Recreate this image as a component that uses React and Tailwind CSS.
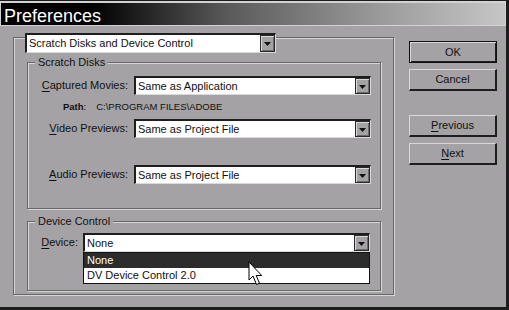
import React from "react";

const Arrow = () => (
  <svg width="7" height="4" viewBox="0 0 7 4" className="mt-[1px]">
    <polygon points="0,0 7,0 3.5,4" fill="#111" />
  </svg>
);

const Dropdown = ({ value, className = "" }) => (
  <div
    className={`flex border-t-2 border-l-2 border-t-[#1e1e1e] border-l-[#1e1e1e] border-b border-r border-b-[#dadada] border-r-[#dadada] bg-white ${className}`}
  >
    <div className="flex-1 truncate pl-[2px] text-[11px] leading-[16px] text-[#111]">
      {value}
    </div>
    <div className="flex w-[15px] items-center justify-center border border-[#2a2a2a] bg-[#a4a2a4] shadow-[inset_1px_1px_0_#d8d8d8,inset_-1px_-1px_0_#6a6a6a]">
      <Arrow />
    </div>
  </div>
);

const Group = ({ title, className = "", children }) => (
  <div
    className={`flex flex-col border border-[#686868] shadow-[inset_1px_1px_0_#d6d6d6,1px_1px_0_#d6d6d6] ${className}`}
  >
    <div className="-mt-[8px] ml-[7px] self-start bg-[#a4a2a4] px-[3px] text-[11px] leading-[14px] text-[#111]">
      {title}
    </div>
    {children}
  </div>
);

const Button = ({ children, primary, className = "" }) => (
  <div
    className={
      primary
        ? `flex h-[22px] w-[88px] items-center justify-center border border-[#111] text-[11px] text-[#111] shadow-[inset_1px_1px_0_#d8d8d8,inset_-1px_-1px_0_#1e1e1e] ${className}`
        : `flex h-[22px] w-[88px] items-center justify-center border-t border-l border-t-[#d8d8d8] border-l-[#d8d8d8] border-b-2 border-r-2 border-b-[#1e1e1e] border-r-[#1e1e1e] text-[11px] text-[#111] ${className}`
    }
  >
    {children}
  </div>
);

const U = ({ children }) => (
  <span className="underline underline-offset-[2px]">{children}</span>
);

export default function App() {
  return (
    <div className="relative flex h-[310px] w-[509px] flex-col overflow-hidden border-t border-r-[3px] border-b-[3px] border-[#1c1c1c] bg-[#a4a2a4] font-['Liberation_Sans',Arial,sans-serif]">
      {/* title bar */}
      <div className="h-[25px] border-t-2 border-b border-x border-[#d2d2d2]">
        <div className="h-[22px] bg-[linear-gradient(to_right,#000_0%,#000_18%,#5a5a5a_45%,#9a9a9a_75%,#c6c6c6_100%)] pl-[3px] pt-[4px] text-[18px] leading-[18px] text-white">
          Preferences
        </div>
      </div>

      <div className="flex flex-1 pl-[13px] pt-[11px]">
        {/* left panel */}
        <div className="flex h-[258px] w-[381px] flex-col border border-[#686868] shadow-[inset_1px_1px_0_#d6d6d6,1px_1px_0_#d6d6d6]">
          <Dropdown
            value="Scratch Disks and Device Control"
            className="-mt-[5px] ml-[11px] h-[20px] w-[251px]"
          />

          <Group title="Scratch Disks" className="ml-[13px] mt-[9px] h-[147px] w-[354px]">
            <div className="mt-[7px] flex items-center">
              <div className="w-[100px] text-right text-[11px] text-[#111]">
                <U>C</U>aptured Movies:
              </div>
              <Dropdown value="Same as Application" className="ml-[6px] h-[19px] w-[237px]" />
            </div>
            <div className="mt-[6px] flex h-[12px] items-center pl-[35px] text-[9.5px] leading-[12px] text-[#111]">
              <span className="font-bold">Path</span>
              <span>:</span>
              <span className="ml-[10px]">C:\PROGRAM FILES\ADOBE</span>
            </div>
            <div className="mt-[6px] flex items-center">
              <div className="w-[100px] text-right text-[11px] text-[#111]">
                <U>V</U>ideo Previews:
              </div>
              <Dropdown value="Same as Project File" className="ml-[6px] h-[19px] w-[237px]" />
            </div>
            <div className="mt-[27px] flex items-center">
              <div className="w-[100px] text-right text-[11px] text-[#111]">
                <U>A</U>udio Previews:
              </div>
              <Dropdown value="Same as Project File" className="ml-[6px] h-[19px] w-[237px]" />
            </div>
          </Group>

          <Group title="Device Control" className="ml-[13px] mt-[12px] h-[70px] w-[354px]">
            <div className="mt-[5px] flex items-center">
              <div className="w-[50px] text-right text-[11px] text-[#111]">
                <U>D</U>evice:
              </div>
              <div className="relative ml-[5px]">
                <Dropdown value="None" className="h-[19px] w-[287px]" />
                <div className="absolute left-0 top-[19px] z-10 w-[287px] border border-[#111] bg-white text-[11px] leading-[15px]">
                  <div className="bg-[#2c2c2c] pl-[3px] text-white">None</div>
                  <div className="pl-[3px] text-[#111]">DV Device Control 2.0</div>
                </div>
              </div>
            </div>
          </Group>
        </div>

        {/* right buttons */}
        <div className="ml-[15px] flex flex-col pt-[4px]">
          <Button primary>OK</Button>
          <Button className="mt-[6px]">Cancel</Button>
          <Button className="mt-[24px]">
            <span>
              <U>P</U>revious
            </span>
          </Button>
          <Button className="mt-[6px]">
            <span>
              <U>N</U>ext
            </span>
          </Button>
        </div>
      </div>

      {/* mouse pointer */}
      <svg
        width="16"
        height="26"
        viewBox="0 0 16 26"
        className="absolute left-[248px] top-[260px] z-20"
      >
        <polygon
          points="1,1 1,19 5,15 8.5,23.5 11.5,22.2 8.2,14.5 13.7,14.5"
          fill="white"
          stroke="black"
          strokeWidth="1"
        />
      </svg>
    </div>
  );
}
